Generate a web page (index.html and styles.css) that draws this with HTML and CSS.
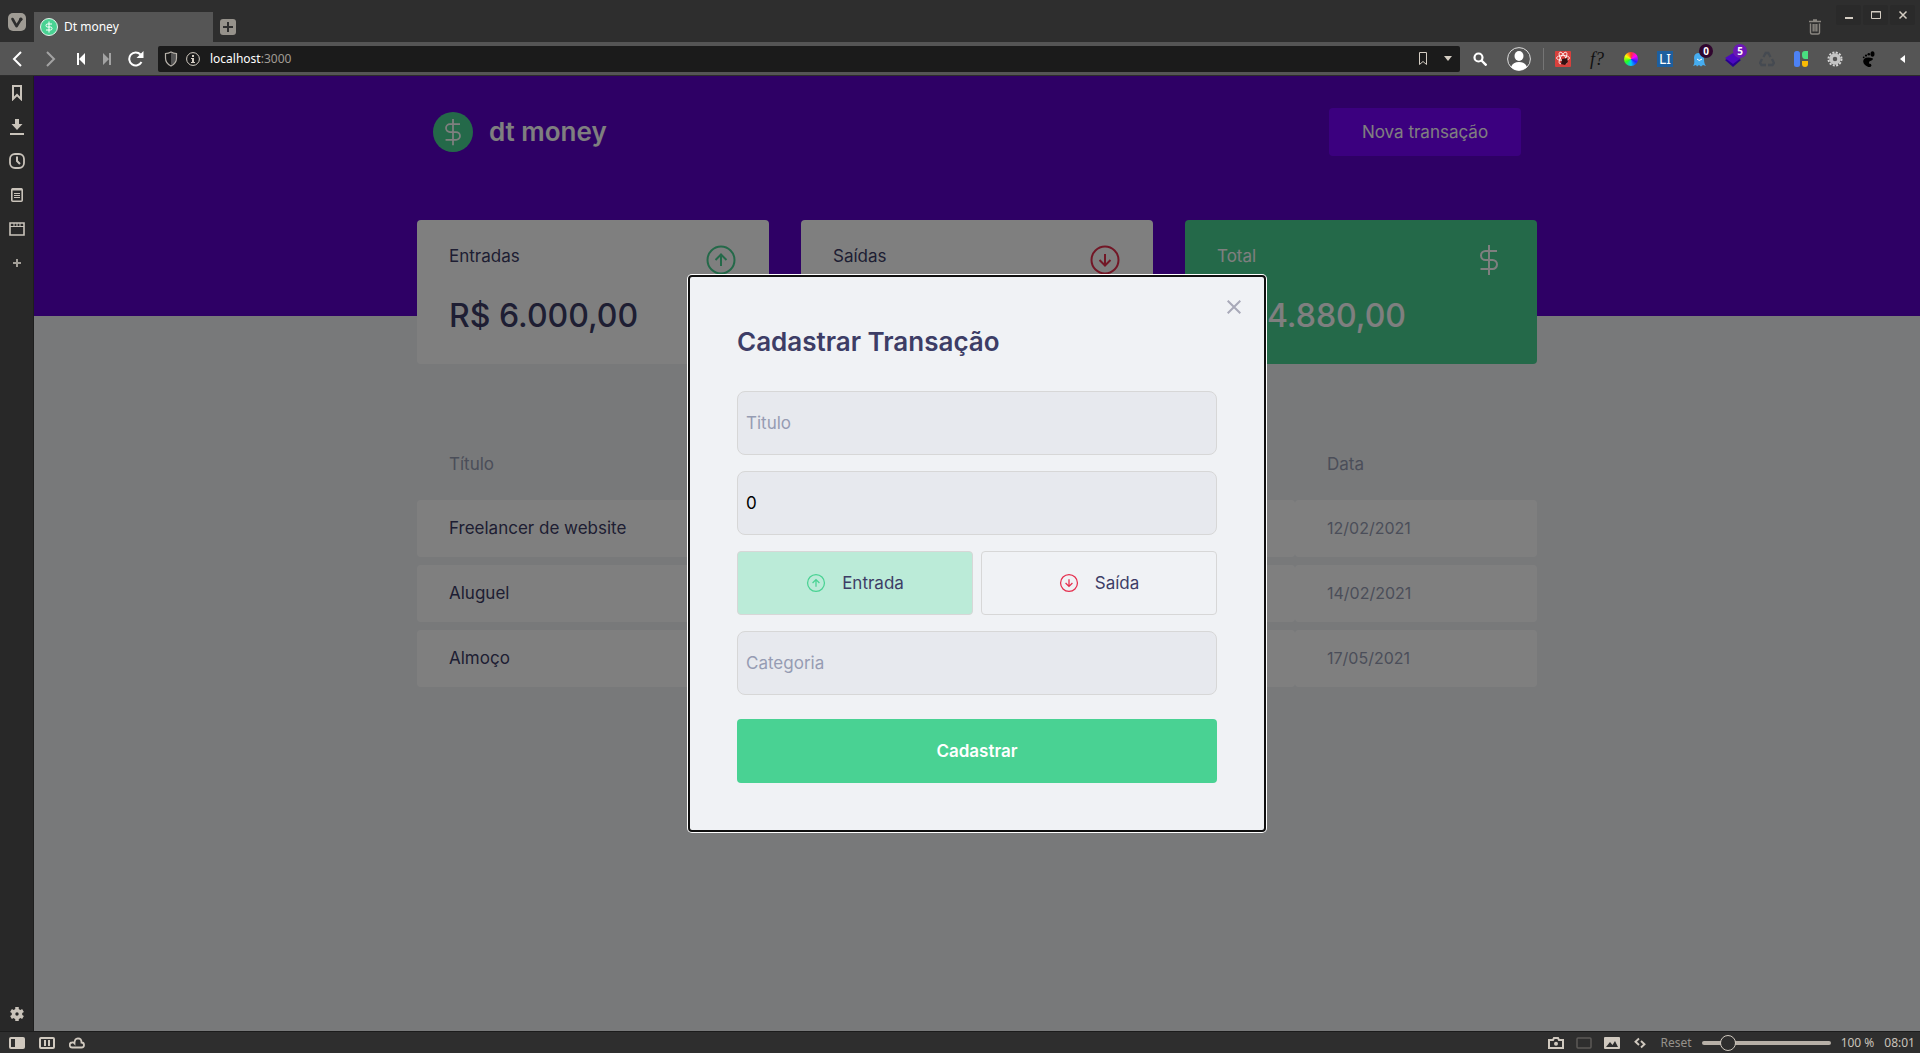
FILE: index.html
```
<!DOCTYPE html>
<html lang="pt-BR">
<head>
<meta charset="utf-8">
<meta name="viewport" content="width=device-width, initial-scale=1">
<title>Dt money</title>
<link rel="stylesheet" href="styles.css">
</head>
<body>
<svg class="sprite" aria-hidden="true">
  <symbol id="dollar" viewBox="0 0 32 32"><path d="M16 1v30M24 7H12.500a4.500 4.500 0 0 0 0 9h7a4.500 4.500 0 0 1 0 9H7.500" fill="none" stroke="currentColor" stroke-width="2"/></symbol>
  <symbol id="income" viewBox="0 0 32 32"><circle cx="16" cy="16" r="13.500" fill="none" stroke="currentColor" stroke-width="2"/><path d="M16 22V11M10.500 16 16 10.500 21.500 16" fill="none" stroke="currentColor" stroke-width="2"/></symbol>
  <symbol id="outcome" viewBox="0 0 32 32"><circle cx="16" cy="16" r="13.500" fill="none" stroke="currentColor" stroke-width="2"/><path d="M16 10v11M10.500 16 16 21.500 21.500 16" fill="none" stroke="currentColor" stroke-width="2"/></symbol>
</svg>

<header class="tabstrip">
  <button class="vivaldi" aria-label="Menu"><svg width="18" height="18" viewBox="0 0 18 18"><rect width="18" height="18" rx="5" fill="#9f9b94"/><path d="M4.500 6 8.500 13.200 13 6" fill="none" stroke="#2e2e2e" stroke-width="2.600" stroke-linecap="round" stroke-linejoin="round"/><circle cx="12.800" cy="6.200" r="1.700" fill="#2e2e2e"/></svg></button>
  <div class="tab">
    <svg class="favicon" width="18" height="18" viewBox="0 0 18 18"><circle cx="9" cy="9" r="8.500" fill="#49d293" stroke="#e5f5ed"/><path d="M9 3.500v11M12 6H7.500a1.500 1.500 0 0 0 0 3h3a1.500 1.500 0 0 1 0 3H6" fill="none" stroke="#fff"/></svg>
    <span>Dt money</span>
  </div>
  <button class="newtab" aria-label="Nova aba"><svg width="16" height="16" viewBox="0 0 16 16"><rect width="16" height="16" rx="3" fill="#96928b"/><path d="M8 3v10M3 8h10" stroke="#2e2e2e" stroke-width="2"/></svg></button>
  <button class="trash" aria-label="Lixeira"><svg width="14" height="16" viewBox="0 0 14 16"><path d="M1 2.500h12M5 1h4M2.500 4.500v9q0 1.500 1.500 1.500h6q1.500 0 1.500-1.500v-9M5.200 5v7.500M7 5v7.500M8.800 5v7.500" fill="none" stroke="#8b8781" stroke-width="1.400"/></svg></button>
  <div class="window-buttons">
    <button aria-label="Minimizar"><svg width="12" height="12" viewBox="0 0 12 12"><path d="M2 9h8" stroke="#d4cdc3" stroke-width="2"/></svg></button>
    <button aria-label="Maximizar"><svg width="12" height="12" viewBox="0 0 12 12"><path d="M1.500 2.500h9v7h-9zM1 3h10" fill="none" stroke="#d4cdc3"/></svg></button>
    <button aria-label="Fechar"><svg width="12" height="12" viewBox="0 0 12 12"><path d="m2.500 2.500 7 7m0-7-7 7" stroke="#d4cdc3" stroke-width="1.500"/></svg></button>
  </div>
</header>

<nav class="toolbar" aria-label="Navegação">
  <div class="history">
    <button aria-label="Voltar"><svg width="16" height="16" viewBox="0 0 16 16"><path d="M12 1 5 8l7 7" fill="none" stroke="#fff" stroke-width="2"/></svg></button>
    <button aria-label="Avançar"><svg width="16" height="16" viewBox="0 0 16 16"><path d="m4 1 7 7-7 7" fill="none" stroke="#a3a3a3" stroke-width="2"/></svg></button>
    <button aria-label="Início"><svg width="12" height="12" viewBox="0 0 12 12"><path d="M2 0h2v12H2zM10 0v12L4 6z" fill="#fff"/></svg></button>
    <button aria-label="Fim"><svg width="12" height="12" viewBox="0 0 12 12"><path d="M8 0h2v12H8zM2 0v12l6-6z" fill="#a3a3a3"/></svg></button>
    <button aria-label="Recarregar"><svg width="16" height="16" viewBox="0 0 16 16"><path d="M13.500 11A6.500 6.500 0 1 1 12.500 3.500" fill="none" stroke="#fff" stroke-width="2"/><path d="M15.500 0v7h-7z" fill="#fff"/></svg></button>
  </div>
  <div class="address">
    <svg width="14" height="16" viewBox="0 0 14 16"><path d="M7 2v12q5-2 5-7V3z" fill="#555"/><path d="M1.500 2.500Q4.500 2.500 7 1q2.500 1.500 5.500 1.500V7q0 5.500-5.500 8Q1.500 12.500 1.500 7z" fill="none" stroke="#b7b2aa" stroke-width="1.200"/></svg>
    <svg width="14" height="14" viewBox="0 0 14 14"><circle cx="7" cy="7" r="6.400" fill="none" stroke="#d4cdc3"/><path d="M6 3h2v2H6zM5 6h3v4h1v1H5v-1h1V7H5z" fill="#d4cdc3"/></svg>
    <div class="url" role="textbox" contenteditable="true" spellcheck="false" aria-label="Endereço">localhost<span>:3000</span></div>
    <button aria-label="Favoritar"><svg width="10" height="14" viewBox="0 0 10 14"><path d="M1.500.500h7v12L5 9.500l-3.500 3z" fill="none" stroke="#d4cdc3"/></svg></button>
    <button aria-label="Mostrar histórico"><svg width="8" height="6" viewBox="0 0 8 6"><path d="M0 0h8L4 5z" fill="#d4cdc3"/></svg></button>
  </div>
  <button class="search" aria-label="Pesquisar"><svg width="14" height="14" viewBox="0 0 14 14"><circle cx="5.500" cy="5.500" r="4" fill="none" stroke="#fff" stroke-width="2.200"/><path d="m8.500 8.500 5 5" stroke="#fff" stroke-width="2.400"/></svg></button>
  <button class="profile" aria-label="Perfil"><svg width="24" height="24" viewBox="0 0 24 24"><circle cx="12" cy="12" r="11.400" fill="none" stroke="#ddd"/><ellipse cx="12" cy="9" rx="4.500" ry="5" fill="#fff"/><path d="M4 20q2-5 8-5t8 5q-3 3.500-8 3.500T4 20" fill="#fff"/></svg></button>
  <span class="divider"></span>
  <div class="extensions">
    <button aria-label="React"><svg width="16" height="16" viewBox="0 0 16 16"><rect width="16" height="16" rx="1" fill="#d8403c"/><g fill="none" stroke="#fff" stroke-width=".8"><ellipse cx="8" cy="7" rx="6.500" ry="2.500"/><ellipse cx="8" cy="7" rx="6.500" ry="2.500" transform="rotate(60 8 7)"/><ellipse cx="8" cy="7" rx="6.500" ry="2.500" transform="rotate(120 8 7)"/></g><path d="m7 8 5-1 1 4-3 3-4-1z" fill="#311"/></svg></button>
    <button class="font-finder" aria-label="Fontes"><i>f?</i></button>
    <button aria-label="Cores"><span class="wheel"></span></button>
    <button aria-label="LI"><span class="li-box">LI</span></button>
    <button aria-label="Ghostery"><svg width="14" height="16" viewBox="0 0 14 16"><path d="M1 15q2-3 1-8Q2 2 7 2t5 6q0 5 2 7l-3-1-2 1.500L7 14l-2 1.500L4 14z" fill="#46adf0"/><path d="M5 8q2 3 5 0" fill="none" stroke="#fff"/></svg><span class="badge dark">0</span></button>
    <button aria-label="Camadas"><svg width="16" height="16" viewBox="0 0 16 16"><path d="m0 9 8-4 8 4-8 7z" fill="#28008d"/><path d="m0 7 8-5 8 5-8 6z" fill="#4c08bf"/></svg><span class="badge purple">5</span></button>
    <button aria-label="Reciclar"><svg width="16" height="16" viewBox="0 0 16 16"><path d="m4.500 6 2.200-4h2.600l2.200 4M13 8l2 4-1.500 2H9M7 14H2.500L1 12l2-4" fill="none" stroke="#454a51" stroke-width="2.300"/></svg></button>
    <button aria-label="Blocos"><svg width="16" height="16" viewBox="0 0 16 16"><rect x="1" width="6" height="16" rx="2.500" fill="#4d82f5"/><path d="M9 3q0-3 3-3h3v8h-3q-3 0-3-4z" fill="#4ade80"/><path d="M9 10h6v3q0 3-3 3t-3-3z" fill="#fabc05"/></svg></button>
    <button aria-label="Ajustes"><svg width="16" height="16" viewBox="0 0 16 16"><circle cx="8" cy="8" r="6.500" fill="none" stroke="#d5d5d5" stroke-width="2" stroke-dasharray="2 1.400"/><circle cx="8" cy="8" r="4" fill="none" stroke="#c4c4c4" stroke-width="3.500"/></svg></button>
    <button aria-label="Gnome"><svg width="14" height="16" viewBox="0 0 14 16"><path d="M11 7.500Q5 5.500 2 8q-2 3 1 6 5 4 6.500.5 0-2-2.500-2-.5-2.500 2.500-3 1.500-.5 1.500-2z"/><ellipse cx="10.500" cy="3" rx="2" ry="2.800"/><circle cx="6.800" cy="3.200" r="1.300"/><circle cx="4" cy="4.600" r="1.100"/><circle cx="1.700" cy="6.300" r=".9"/></svg></button>
    <button aria-label="Recolher extensões"><svg width="6" height="8" viewBox="0 0 6 8"><path d="M5 0v8L0 4z" fill="#fff"/></svg></button>
  </div>
</nav>

<div class="workspace">
  <aside class="panel">
    <button aria-label="Favoritos"><svg width="16" height="16" viewBox="0 0 16 16"><path d="M4 1h8v13l-4-4-4 4z" fill="none" stroke="#c9c3ba" stroke-width="2"/></svg></button>
    <button aria-label="Downloads"><svg width="16" height="16" viewBox="0 0 16 16"><path d="M6 0h4v5h3.500L8 11 2.500 5H6zM1 14h14v2H1z" fill="#c9c3ba"/></svg></button>
    <button aria-label="Histórico"><svg width="16" height="16" viewBox="0 0 16 16"><rect x="1" y="1" width="14" height="14" rx="5" fill="none" stroke="#c9c3ba" stroke-width="1.800"/><path d="M8 3.500V8l3 3" fill="none" stroke="#c9c3ba" stroke-width="2"/></svg></button>
    <button aria-label="Notas"><svg width="16" height="16" viewBox="0 0 16 16"><rect x="2.800" y="1.800" width="10.400" height="12.400" rx="1" fill="none" stroke="#c9c3ba" stroke-width="1.600"/><path d="M3 2.500h10" stroke="#c9c3ba" stroke-width="2"/><path d="M5 6.500h6M5 8.500h6M5 10.500h6" stroke="#c9c3ba"/></svg></button>
    <button aria-label="Janelas"><svg width="16" height="16" viewBox="0 0 16 16"><path d="M1 2h14v12H1z" fill="none" stroke="#c9c3ba" stroke-width="1.600"/><path d="M1 5.500h14" stroke="#c9c3ba"/><path d="M5 2v3M8 2v3M11 2v3" stroke="#c9c3ba"/></svg></button>
    <button aria-label="Adicionar painel"><svg width="16" height="16" viewBox="0 0 16 16"><path d="M8 4v8M4 8h8" stroke="#a39f98" stroke-width="2"/></svg></button>
    <button class="settings" aria-label="Configurações"><svg width="16" height="16" viewBox="0 0 16 16"><circle cx="8" cy="8" r="3.500" fill="none" stroke="#c9c3ba" stroke-width="3.600"/><path d="M8 1v3M8 12v3M2 4.500 4.500 6M11.500 10l2.500 1.500M2 11.500 4.500 10M11.500 6 14 4.500" stroke="#c9c3ba" stroke-width="3.500"/></svg></button>
  </aside>

  <div class="page">
    <header class="hero">
      <div class="hero-content">
        <div class="brand">
          <span class="brand-mark"><svg width="28" height="28"><use href="#dollar"/></svg></span>
          <span class="brand-name">dt money</span>
        </div>
        <button class="new-transaction">Nova transação</button>
      </div>
    </header>
    <main class="container">
      <section class="summary">
        <article class="card">
          <div class="card-head"><span>Entradas</span><svg class="green" width="32" height="32"><use href="#income"/></svg></div>
          <strong>R$ 6.000,00</strong>
        </article>
        <article class="card">
          <div class="card-head"><span>Saídas</span><svg class="red" width="32" height="32"><use href="#outcome"/></svg></div>
          <strong>R$ 1.120,00</strong>
        </article>
        <article class="card total">
          <div class="card-head"><span>Total</span><svg width="32" height="32"><use href="#dollar"/></svg></div>
          <strong>R$ 4.880,00</strong>
        </article>
      </section>
      <table class="transactions">
        <thead><tr><th class="col-title">Título</th><th>Valor</th><th>Categoria</th><th class="col-date">Data</th></tr></thead>
        <tbody>
          <tr><td class="name">Freelancer de website</td><td>R$ 6.000,00</td><td>Dev</td><td>12/02/2021</td></tr>
          <tr><td class="name">Aluguel</td><td>R$ 1.100,00</td><td>Casa</td><td>14/02/2021</td></tr>
          <tr><td class="name">Almoço</td><td>R$ 20,00</td><td>Comida</td><td>17/05/2021</td></tr>
        </tbody>
      </table>
    </main>

    <div class="overlay">
      <form class="modal" role="dialog" aria-labelledby="modal-title">
        <button type="button" class="close" aria-label="Fechar"><svg width="14" height="14" viewBox="0 0 14 14"><path d="m.700.700 12.600 12.600m0-12.600L.700 13.300" stroke="#a8a9b8" stroke-width="2"/></svg></button>
        <h2 id="modal-title">Cadastrar Transação</h2>
        <input type="text" placeholder="Titulo" aria-label="Título">
        <input type="text" inputmode="numeric" value="0" aria-label="Valor">
        <div class="kinds">
          <button type="button" class="kind active"><svg class="green" width="20" height="20"><use href="#income"/></svg><span>Entrada</span></button>
          <button type="button" class="kind"><svg class="red" width="20" height="20"><use href="#outcome"/></svg><span>Saída</span></button>
        </div>
        <input type="text" placeholder="Categoria" aria-label="Categoria">
        <button type="submit" class="submit">Cadastrar</button>
      </form>
    </div>
  </div>
</div>

<footer class="statusbar">
  <div class="status-icons">
    <button aria-label="Painel"><svg width="16" height="12" viewBox="0 0 16 12"><rect width="16" height="12" rx="2" fill="#d0c9bf"/><path d="M2 2h4v8H2z" fill="#2e2e2e"/></svg></button>
    <button aria-label="Pausar"><svg width="16" height="12" viewBox="0 0 16 12"><rect x="1" y="1" width="14" height="10" rx="1" fill="none" stroke="#d0c9bf" stroke-width="2"/><path d="M6 3v6M10 3v6" stroke="#d0c9bf" stroke-width="2"/></svg></button>
    <button aria-label="Sincronizar"><svg width="16" height="12" viewBox="0 0 16 12"><path d="M3.500 10.500a2.500 2.500 0 0 1-.5-5q1.500-.3 2.500.8Q5.500 1.500 9 1.300q3.500 0 3.500 4.200 2.500 0 2.500 2.500t-2.500 2.500z" fill="none" stroke="#d0c9bf" stroke-width="1.800"/></svg></button>
  </div>
  <div class="status-right">
    <div class="status-icons">
      <button aria-label="Capturar"><svg width="16" height="12" viewBox="0 0 16 12"><path d="M1 3h4l1-2h4l1 2h4v8H1z" fill="none" stroke="#d0c9bf" stroke-width="2"/><circle cx="8" cy="6.800" r="2" fill="#d0c9bf"/></svg></button>
      <button aria-label="Lado a lado"><svg width="16" height="12" viewBox="0 0 16 12"><rect x="1" y="1" width="14" height="10" rx="1" fill="none" stroke="#5c5a57" stroke-width="1.500"/></svg></button>
      <button aria-label="Imagens"><svg width="16" height="12" viewBox="0 0 16 12"><rect width="16" height="12" rx="1" fill="#d0c9bf"/><path d="m2 10 4-5 2.500 3L11 4l3 6z" fill="#2e2e2e"/></svg></button>
      <button aria-label="Efeitos"><svg width="16" height="12" viewBox="0 0 16 12"><path d="M7 1.500 3.500 4.700 7 8M9 4l3.500 3.200L9 10.500" fill="none" stroke="#d0c9bf" stroke-width="1.900"/></svg></button>
    </div>
    <button class="reset">Reset</button>
    <input type="range" min="20" max="500" value="100" aria-label="Zoom">
    <span>100 %</span>
    <span>08:01</span>
  </div>
</footer>
</body>
</html>
```
FILE: styles.css
```
* { box-sizing: border-box; margin: 0; padding: 0; }
body {
  display: flex;
  flex-direction: column;
  min-height: 100vh;
  background: #2e2e2e;
  font-family: "Noto Sans", "Open Sans", sans-serif;
  font-size: 12px;
  line-height: 16px;
}
button { border: 0; background: none; color: inherit; font: inherit; cursor: pointer; }
svg { display: block; flex: none; }
.sprite { position: absolute; width: 0; height: 0; }
.green { color: #49d293; }
.red { color: #e52e4d; }

/* Browser tab strip */
.tabstrip { display: flex; height: 42px; }
.vivaldi { display: grid; place-items: center; width: 34px; padding-top: 2px; }
.tab {
  display: flex;
  align-items: center;
  align-self: flex-end;
  gap: 6px;
  width: 179px;
  height: 30px;
  padding: 0 6px;
  background: #555;
  color: #fff;
}
.newtab { display: grid; place-items: center; width: 30px; padding-top: 12px; }
.trash { display: grid; place-items: center; margin-left: auto; padding: 12px 14px 0 0; }
.window-buttons { display: flex; gap: 2px; padding: 5px 5px 0 0; }
.window-buttons button { display: grid; place-items: center; width: 25px; height: 20px; border-radius: 2px; background: #2a2a2a; }

/* Address bar and extensions */
.toolbar { display: flex; align-items: center; height: 34px; border-bottom: 1px solid #2c2c2c; background: #555; }
.history { display: grid; grid-template-columns: 33px 36px 24px 28px 30px; padding-right: 7px; }
.history button, .search, .profile { display: grid; place-items: center; }
.address {
  display: flex;
  flex: 1;
  align-items: center;
  gap: 8px;
  height: 26px;
  padding: 0 4px 0 6px;
  border-radius: 2px;
  background: #1b1b1b;
}
.url { flex: 1; padding-left: 2px; color: #fff; }
.url span { color: #a09b94; }
.address button { padding: 4px; }
.search { width: 40px; }
.profile { width: 38px; }
.divider { width: 1px; height: 22px; margin: 0 2px 0 5px; background: #757575; }
.extensions { display: flex; }
.extensions button { position: relative; display: grid; place-items: center; width: 34px; height: 33px; }
.extensions .font-finder { color: #111; font: 18px/20px "Liberation Serif", serif; }
.wheel {
  width: 14px;
  height: 14px;
  border-radius: 50%;
  background: conic-gradient(#f33, #f0f 60deg, #22f 120deg, #0cf 180deg, #2f2 240deg, #ff0 300deg, #f33);
}
.li-box { width: 16px; height: 16px; background: #1d5f9f; color: #fff; font: 14px/16px "Noto Sans", sans-serif; }
.badge {
  position: absolute;
  top: 2px;
  right: 3px;
  width: 14px;
  height: 14px;
  border-radius: 50%;
  color: #fff;
  font-size: 10px;
  font-weight: 700;
  line-height: 14px;
  text-align: center;
}
.badge.dark { background: #30062f; }
.badge.purple { background: #6c18b5; }

/* Side panel */
.workspace { display: flex; flex: 1; }
.panel { display: flex; flex-direction: column; width: 34px; border-right: 1px solid #1e1e1e; background: #282828; }
.panel button { display: grid; place-items: center; height: 34px; }
.panel .settings { margin-top: auto; }

/* Web page */
.page {
  position: relative;
  flex: 1;
  background: #f0f2f5;
  color: #969cb3;
  font-family: Inter, "Open Sans", sans-serif;
  font-size: 17px;
  line-height: 24px;
}
.hero { padding: 32px 32px 160px; background: #5d00cb; }
.hero-content { display: flex; align-items: center; justify-content: space-between; max-width: 1120px; margin: 0 auto; padding: 0 16px; }
.brand { display: flex; align-items: center; gap: 16px; color: #fff; }
.brand-mark { display: grid; place-items: center; width: 40px; height: 40px; border-radius: 50%; background: #49d293; }
.brand-name { font-size: 26px; font-weight: 600; }
.new-transaction { min-width: 192px; height: 48px; border-radius: 4px; background: #7700ff; color: #fff; }
.container { max-width: 1120px; margin: -96px auto 0; }
.summary { display: grid; grid-template-columns: repeat(3, 1fr); gap: 32px; }
.card { padding: 24px 32px; border-radius: 4px; background: #fff; color: #3d3d66; }
.card-head { display: flex; align-items: flex-start; justify-content: space-between; height: 32px; }
.card strong { display: block; margin-top: 16px; font-size: 32px; font-weight: 500; line-height: 48px; }
.card.total { background: #49d293; color: #fff; }
.transactions { width: 100%; margin-top: 64px; border-spacing: 0 8px; table-layout: fixed; }
.transactions th { padding: 16px 32px; font-weight: 400; text-align: left; }
.transactions td { padding: 16px 32px; border-radius: 4px; background: #fff; font-size: 16px; line-height: 25px; }
.transactions .name { color: #3d3d66; font-size: 17px; }
.col-title { width: 400px; }
.col-date { width: 242px; }

/* New transaction dialog */
.overlay { position: absolute; inset: 0; display: grid; place-items: center; background: rgba(0, 0, 0, 0.5); }
.modal {
  position: relative;
  display: flex;
  flex-direction: column;
  gap: 16px;
  width: 100%;
  max-width: 576px;
  padding: 48px;
  outline: 2px solid #101010;
  outline-offset: -1px;
  border-radius: 3px;
  background: #f0f2f5;
  box-shadow: 0 0 0 2px #fff;
}
.close { position: absolute; top: 24px; right: 24px; }
.modal h2 { margin-bottom: 16px; color: #3d3d66; font-size: 26px; font-weight: 600; line-height: 35px; }
.modal input {
  width: 100%;
  height: 64px;
  padding: 0 8px;
  border: 1px solid #d7d7d7;
  border-radius: 8px;
  background: #e7e9ee;
  color: #000;
  font: inherit;
}
.modal input::placeholder { color: #969cb3; }
.kinds { display: grid; grid-template-columns: 1fr 1fr; gap: 8px; }
.kind {
  display: flex;
  align-items: center;
  justify-content: center;
  gap: 16px;
  height: 64px;
  border: 1px solid #d7d7d7;
  border-radius: 4px;
  color: #3d3d66;
}
.kind.active { background: #bbebd8; }
.submit { height: 64px; margin-top: 8px; border-radius: 4px; background: #49d293; color: #fff; font-weight: 600; }

/* Status bar */
.statusbar { display: flex; align-items: center; justify-content: space-between; height: 22px; padding: 0 5px 0 9px; border-top: 1px solid #1c1c1c; color: #c9c3ba; }
.status-icons { display: flex; gap: 12px; }
.statusbar > .status-icons { gap: 14px; }
.status-right { display: flex; align-items: center; gap: 10px; }
.reset { margin-left: 3px; color: #96928b; }
.status-right input { appearance: none; width: 129px; height: 16px; background: none; }
.status-right input::-webkit-slider-runnable-track { height: 4px; border-radius: 2px; background: #b7b0a7; }
.status-right input::-webkit-slider-thumb { appearance: none; width: 16px; height: 16px; margin-top: -6px; border: 1px solid #d0c9bf; border-radius: 50%; background: #2e2e2e; }
```
